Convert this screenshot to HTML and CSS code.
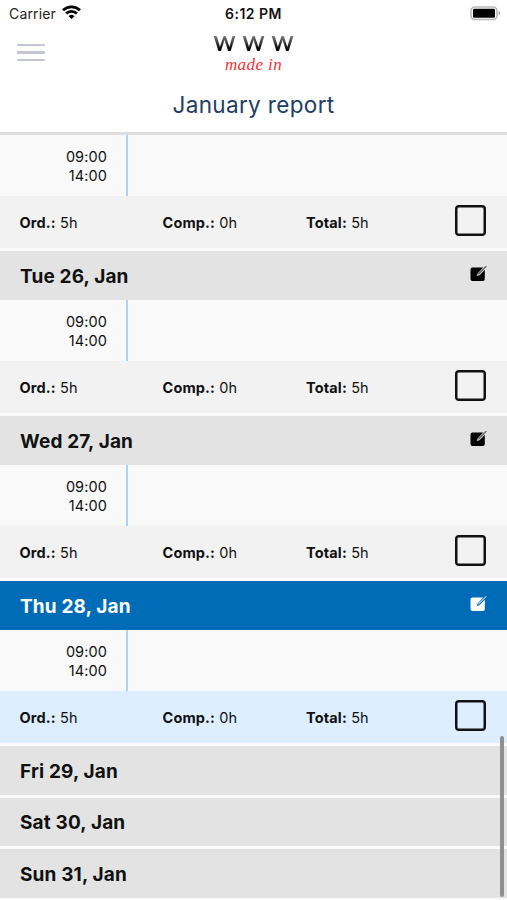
FILE: index.html
```html
<!DOCTYPE html>
<html lang="en">
<head>
  <meta charset="UTF-8">
  <meta name="viewport" content="width=device-width, initial-scale=1.0">
  <title>January report</title>
  <link rel="stylesheet" href="styles.css">
</head>
<body>
  <svg class="sprite" aria-hidden="true">
    <symbol id="edit" viewBox="0 0 18 18">
      <path d="M2.500 3.500h10.700L7.600 9.400l-.8 2.600 2.700-.8 5.300-5.400v9.200a2 2 0 0 1-2 2H2.500a2 2 0 0 1-2-2V5.500a2 2 0 0 1 2-2z" fill="currentColor"/>
      <path d="M7.900 10.800l.5-1.500 7.500-7.600.9.9-7.500 7.600z" fill="currentColor" fill-opacity=".6"/>
    </symbol>
  </svg>

  <header class="header">
    <div class="status">
      <div class="carrier">Carrier
        <svg width="19" height="15" viewBox="0 0 19 15" fill="none" stroke="#000" stroke-width="2.8">
          <path d="M1 5.300a12.200 12.200 0 0 1 17 0M4.100 8.600a7.700 7.700 0 0 1 10.800 0"/>
          <path d="M6.600 11.200a4.200 4.200 0 0 1 5.800 0L9.500 14.100z" fill="#000" stroke="none"/>
        </svg>
      </div>
      <div class="clock">6:12 PM</div>
      <svg class="battery" width="31" height="15" viewBox="0 0 31 15">
        <rect x="1" y="1" width="26" height="12.5" rx="3.8" fill="#fff" stroke="#b8b8b8" stroke-width="1.6"/>
        <rect x="3" y="2.8" width="22" height="9" rx="1.2" fill="#000"/>
        <path d="M28.600 5.100q3 2.100 0 4.300z" fill="#999"/>
      </svg>
    </div>
    <div class="brand">
      <button class="menu" aria-label="Menu"><i></i><i></i><i></i></button>
      <div class="logo">
        <div class="www">WWW</div>
        <div class="made">made in</div>
      </div>
    </div>
    <h1>January report</h1>
  </header>

  <main class="report">
    <section class="day">
      <div class="slot"><div class="hours">09:00<br>14:00</div></div>
      <div class="summary"><p><b>Ord.:</b> 5h</p><p><b>Comp.:</b> 0h</p><p><b>Total:</b> 5h</p><span class="check"></span></div>
    </section>
    <section class="day">
      <h2>Tue 26, Jan <svg class="edit"><use href="#edit"/></svg></h2>
      <div class="slot"><div class="hours">09:00<br>14:00</div></div>
      <div class="summary"><p><b>Ord.:</b> 5h</p><p><b>Comp.:</b> 0h</p><p><b>Total:</b> 5h</p><span class="check"></span></div>
    </section>
    <section class="day">
      <h2>Wed 27, Jan <svg class="edit"><use href="#edit"/></svg></h2>
      <div class="slot"><div class="hours">09:00<br>14:00</div></div>
      <div class="summary"><p><b>Ord.:</b> 5h</p><p><b>Comp.:</b> 0h</p><p><b>Total:</b> 5h</p><span class="check"></span></div>
    </section>
    <section class="day today">
      <h2>Thu 28, Jan <svg class="edit"><use href="#edit"/></svg></h2>
      <div class="slot"><div class="hours">09:00<br>14:00</div></div>
      <div class="summary"><p><b>Ord.:</b> 5h</p><p><b>Comp.:</b> 0h</p><p><b>Total:</b> 5h</p><span class="check"></span></div>
    </section>
    <section class="day"><h2>Fri 29, Jan</h2></section>
    <section class="day"><h2>Sat 30, Jan</h2></section>
    <section class="day"><h2>Sun 31, Jan</h2></section>
    <div class="scrollbar"></div>
  </main>
</body>
</html>
```
FILE: styles.css
```css
* { box-sizing: border-box; }
body {
  margin: 0;
  height: 900px;
  overflow: hidden;
  background: #fafafa;
  color: #111;
  font-family: Inter, "Liberation Sans", sans-serif;
}
h1, h2, p { margin: 0; }
.sprite { position: absolute; width: 0; height: 0; }

/* header */
.header {
  height: 135px;
  background: #fff;
  border-bottom: 3px solid #dedede;
}
.status {
  display: grid;
  grid-template-columns: 1fr auto 1fr;
  align-items: center;
  height: 27px;
  padding: 0 6px 0 9px;
  font-size: 14px;
}
.carrier { display: flex; align-items: center; gap: 6px; color: #222; letter-spacing: 0.15px; }
.carrier svg { margin-top: -2px; }
.clock { font-weight: 600; font-size: 14px; letter-spacing: 0.5px; margin-right: 3px; }
.battery { justify-self: end; }
.brand {
  display: grid;
  grid-template-columns: 1fr auto 1fr;
  height: 53px;
  padding: 0 17px;
}
.menu {
  display: flex;
  flex-direction: column;
  gap: 5px;
  width: 28px;
  margin-top: 17px;
  padding: 0;
  border: 0;
  background: none;
}
.menu i { height: 2.3px; width: 28px; border-radius: 1px; background: #c3c5d2; }
.logo { text-align: center; padding-top: 6px; }
.www {
  height: 22px;
  font: 700 21px/20px Lato, sans-serif;
  letter-spacing: 7px;
  margin-right: -7px;
  background: linear-gradient(#777 15%, #000 75%);
  -webkit-background-clip: text;
  background-clip: text;
  color: transparent;
}
.made {
  color: #f52f35;
  font: italic 17px/19px "Liberation Serif", serif;
  letter-spacing: 0.4px;
}
h1 {
  color: #213c65;
  font-size: 22.5px;
  font-weight: 400;
  line-height: 50px;
  letter-spacing: 0.35px;
  text-align: center;
}

/* days */
.report { position: relative; }
.day { margin-bottom: 3px; }
h2 {
  display: flex;
  justify-content: space-between;
  align-items: center;
  height: 48.5px;
  padding: 2px 19px 0 20px;
  background: #e3e3e3;
  font-size: 19px;
  font-weight: 700;
  letter-spacing: 0.15px;
}
.edit { width: 18px; height: 18px; margin-top: -7px; color: #000; }
.slot { height: 61px; background: #f9f9f9; }
.hours {
  width: 128px;
  height: 61px;
  padding: 13.4px 19px 0 0;
  border-right: 2px solid #a9d5f5;
  text-align: right;
  font-size: 14.5px;
  line-height: 18.5px;
  letter-spacing: 0.1px;
}
.summary {
  display: grid;
  grid-template-columns: 143px 143.5px 1fr auto;
  align-items: center;
  height: 52.4px;
  padding: 1px 21px 0 19.5px;
  background: #f2f2f2;
  font-size: 14.5px;
  letter-spacing: 0.15px;
}
.check {
  width: 31px;
  height: 31px;
  margin-top: -4px;
  border: 2px solid #111;
  border-radius: 4px;
  box-shadow: inset 0 0 0 0.5px #111;
}
.today h2 { background: #006cb8; color: #fff; }
.today .edit { color: #fff; }
.today .summary { background: #dceeff; }
.scrollbar {
  position: absolute;
  top: 601px;
  right: 3px;
  width: 4px;
  height: 161px;
  border-radius: 2px;
  background: #909090;
}
```
